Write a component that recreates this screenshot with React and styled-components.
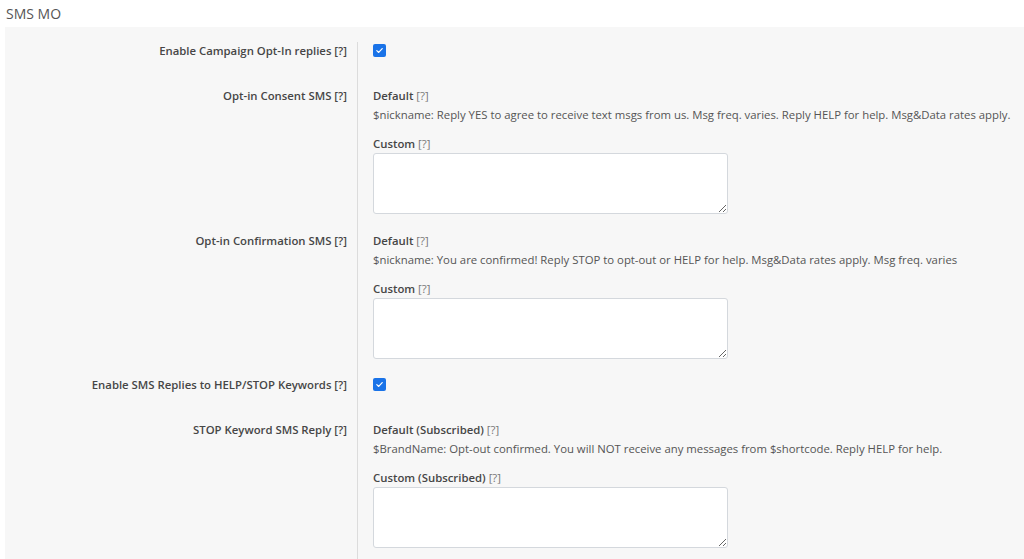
import React from "react";
import styled, { createGlobalStyle } from "styled-components";

const Global = createGlobalStyle`
  html, body { margin: 0; padding: 0; background: #ffffff; }
  body { font-family: "Open Sans", "Noto Sans", sans-serif; font-size: 11.35px; color: #444; }
  * { box-sizing: border-box; }
`;

const Page = styled.div`
  width: 1024px;
  height: 559px;
  overflow: hidden;
  padding-left: 5px;
`;

const Title = styled.h2`
  margin: 0;
  height: 27px;
  padding: 4px 0 0 1px;
  font-size: 14px;
  line-height: 20px;
  font-weight: 400;
  color: #555;
`;

const Panel = styled.div`
  background: #f7f7f7;
  padding-top: 15px;
  min-height: 540px;
`;

const Row = styled.div`
  display: grid;
  grid-template-columns: 352px 1fr;
`;

const Label = styled.div`
  text-align: right;
  padding-right: 10px;
  font-weight: 600;
  line-height: 18px;
  color: #464646;
`;

const Field = styled.div`
  border-left: 1px solid #dcdcdc;
  padding-left: 15px;
  padding-bottom: ${(p) => p.$pb}px;
  min-height: ${(p) => p.$min || 0}px;
`;

const Check = styled.span`
  display: inline-flex;
  align-items: center;
  justify-content: center;
  width: 13px;
  height: 13px;
  margin-top: ${(p) => p.$mt}px;
  border-radius: 2px;
  background: #1a73e8;
`;

const SubLabel = styled.div`
  font-weight: 600;
  line-height: 18px;
  color: #464646;
  margin-top: ${(p) => p.$mt || 0}px;
`;

const Help = styled.span`
  font-weight: 400;
  color: #777;
`;

const Desc = styled.div`
  margin-top: 1px;
  line-height: 18px;
  color: #555;
  white-space: nowrap;
`;

const Area = styled.textarea`
  display: block;
  width: 355px;
  height: 61px;
  border: 1px solid #d4d8dd;
  border-radius: 3px;
  background: #fff;
  resize: vertical;
  font-family: inherit;
`;

const CheckBox = ({ mt }) => (
  <Check $mt={mt}>
    <svg width="9" height="9" viewBox="0 0 10 10">
      <path d="M2 5.2 L4.1 7.2 L8 2.8" fill="none" stroke="#fff" strokeWidth="1.3" strokeLinecap="round" strokeLinejoin="round" />
    </svg>
  </Check>
);

const CheckRow = ({ label, mt = 2 }) => (
  <Row>
    <Label>{label} [?]</Label>
    <Field $pb={0} $min={45}>
      <CheckBox mt={mt} />
    </Field>
  </Row>
);

const TextRow = ({ label, def, desc, custom, pb = 18 }) => (
  <Row>
    <Label>{label} [?]</Label>
    <Field $pb={pb}>
      <SubLabel>
        {def} <Help>[?]</Help>
      </SubLabel>
      <Desc>{desc}</Desc>
      <SubLabel $mt={11}>
        {custom} <Help>[?]</Help>
      </SubLabel>
      <Area />
    </Field>
  </Row>
);

export default function App() {
  return (
    <>
      <Global />
      <Page>
        <Title>SMS MO</Title>
        <Panel>
          <CheckRow label="Enable Campaign Opt-In replies" />
          <TextRow
            label="Opt-in Consent SMS"
            def="Default"
            desc="$nickname: Reply YES to agree to receive text msgs from us. Msg freq. varies. Reply HELP for help. Msg&Data rates apply."
            custom="Custom"
          />
          <TextRow
            label="Opt-in Confirmation SMS"
            def="Default"
            desc="$nickname: You are confirmed! Reply STOP to opt-out or HELP for help. Msg&Data rates apply. Msg freq. varies"
            custom="Custom"
            pb={17}
          />
          <CheckRow label="Enable SMS Replies to HELP/STOP Keywords" />
          <TextRow
            label="STOP Keyword SMS Reply"
            def="Default (Subscribed)"
            desc="$BrandName: Opt-out confirmed. You will NOT receive any messages from $shortcode. Reply HELP for help."
            custom="Custom (Subscribed)"
            pb={30}
          />
        </Panel>
      </Page>
    </>
  );
}
